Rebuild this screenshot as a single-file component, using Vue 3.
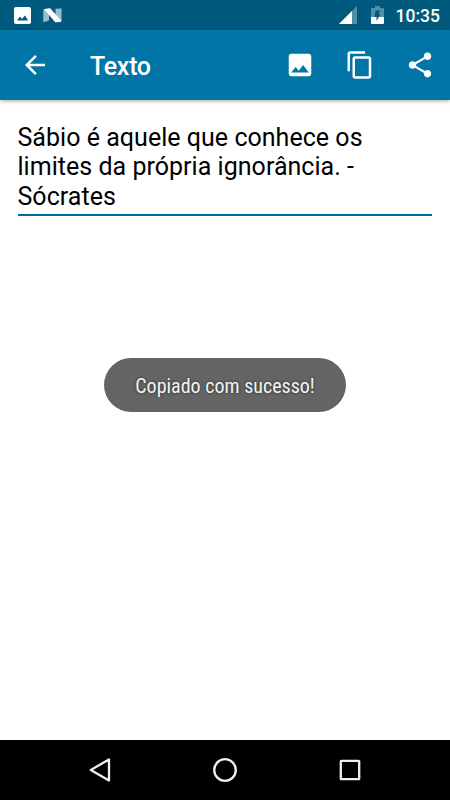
<template>
    <div class="screen">
        <div class="status">
            <svg class="status-image" width="17" height="17" viewBox="0 0 17 17">
                <path fill="#fff" fill-rule="evenodd" d="M2 0h13a2 2 0 0 1 2 2v13a2 2 0 0 1-2 2H2a2 2 0 0 1-2-2V2a2 2 0 0 1 2-2zM3 13.5h11.2l-3.3-5-2.9 3.4-2-2.4z" />
            </svg>
            <svg class="status-n" width="19" height="15" viewBox="0 0 19 15">
                <path fill="#fff" fill-opacity=".6" d="M0.3 1.2v13l5.7-1.7V3z M18.5 0.6v13l-6-2.4V0.8z" />
                <path fill="#fff" d="M1 1L7.2 0.2L18.3 12.8L17.5 14L12.2 14.3z" />
            </svg>
            <div class="status-right">
                <svg class="signal" width="18" height="18" viewBox="0 0 18 18">
                    <path fill="#fff" fill-opacity=".32" d="M18 0v18H0z" />
                    <path fill="#fff" d="M13 5v13H0z" />
                </svg>
                <svg class="battery" width="13" height="18" viewBox="0 0 13 18">
                    <path fill="#fff" fill-opacity=".32" d="M1 2h3V0h5v2h3a1 1 0 0 1 1 1v8H0V3a1 1 0 0 1 1-1z" />
                    <path fill="#fff" d="M0 11h13v6a1 1 0 0 1-1 1H1a1 1 0 0 1-1-1z" />
                    <path fill="#005a7e" d="M4.5 4.5H9L7.5 8H9.5L5.5 15V11H3.5z" />
                </svg>
                <span class="clock">10:35</span>
            </div>
        </div>

        <header class="toolbar">
            <svg class="back" width="30" height="30" viewBox="0 0 24 24">
                <path d="M20 11H7.83l5.59-5.59L12 4l-8 8 8 8 1.41-1.41L7.83 13H20v-2z" />
            </svg>
            <h1>{{ title }}</h1>
            <div class="actions">
                <svg v-for="icon in actions" :key="icon.name" width="30" height="30" viewBox="0 0 24 24">
                    <path :d="icon.path" />
                </svg>
            </div>
        </header>

        <main class="content">
            <p class="field">{{ quote }}</p>
        </main>

        <div class="toast"><span>{{ message }}</span></div>

        <nav class="navbar">
            <svg width="30" height="30" viewBox="0 0 30 30">
                <path d="M5.8 15L24 4.4v21.2z" />
            </svg>
            <svg width="30" height="30" viewBox="0 0 30 30">
                <circle cx="15" cy="15" r="10.8" />
            </svg>
            <svg width="30" height="30" viewBox="0 0 30 30">
                <rect x="5.8" y="5.8" width="18.4" height="18.4" rx=".5" />
            </svg>
        </nav>
    </div>
</template>

<script setup>
import { ref } from 'vue';

const title = 'Texto';
const quote = ref('Sábio é aquele que conhece os limites da própria ignorância. - Sócrates');
const message = ref('Copiado com sucesso!');

const actions = [
    {
        name: 'image',
        path: 'M21 19V5c0-1.1-.9-2-2-2H5c-1.1 0-2 .9-2 2v14c0 1.1.9 2 2 2h14c1.1 0 2-.9 2-2zM8.5 13.5l2.5 3.01L14.5 12l4.5 6H5l3.5-4.5z',
    },
    {
        name: 'copy',
        path: 'M16 1H4c-1.1 0-2 .9-2 2v14h2V3h12V1zm3 4H8c-1.1 0-2 .9-2 2v14c0 1.1.9 2 2 2h11c1.1 0 2-.9 2-2V7c0-1.1-.9-2-2-2zm0 16H8V7h11v14z',
    },
    {
        name: 'share',
        path: 'M18 16.08c-.76 0-1.44.3-1.96.77L8.91 12.7c.05-.23.09-.46.09-.7s-.04-.47-.09-.7l7.05-4.11c.54.5 1.25.81 2.04.81 1.66 0 3-1.34 3-3s-1.34-3-3-3-3 1.34-3 3c0 .24.04.47.09.7L8.04 9.81C7.5 9.31 6.79 9 6 9c-1.66 0-3 1.34-3 3s1.34 3 3 3c.79 0 1.5-.31 2.04-.81l7.12 4.16c-.05.21-.08.43-.08.65 0 1.61 1.31 2.92 2.92 2.92s2.92-1.31 2.92-2.92-1.31-2.92-2.92-2.92z',
    },
];
</script>

<style>
body {
    background-color: #fff;
}
</style>

<style scoped>
.screen {
    position: relative;
    display: flex;
    flex-direction: column;
    width: 450px;
    height: 800px;
    overflow: hidden;
    background-color: #fff;
    font-family: Roboto, "Liberation Sans", sans-serif;
}

svg {
    display: block;
    flex: none;
}

.status {
    display: flex;
    align-items: center;
    height: 30px;
    padding: 0 10px 0 14px;
    box-sizing: border-box;
    background-color: #005a7e;
}

.status-n {
    margin-left: 12px;
}

.status-right {
    display: flex;
    align-items: center;
    margin-left: auto;
}

.battery {
    margin: 0 12px 0 14px;
}

.clock {
    color: #fff;
    font-size: 17.5px;
    font-weight: 500;
    line-height: 30px;
    padding-top: 2px;
}

.toolbar {
    display: flex;
    align-items: center;
    height: 70px;
    padding: 0 15px 0 20px;
    box-sizing: border-box;
    background-color: #0075a6;
    box-shadow: 0 1px 4px rgba(0, 0, 0, 0.35);
}

.toolbar path {
    fill: #fff;
}

h1 {
    margin: 2px 0 0 40px;
    color: #fff;
    font-size: 25px;
    font-weight: 500;
    letter-spacing: -0.3px;
}

.actions {
    display: flex;
    gap: 30px;
    margin-left: auto;
}

.content {
    flex: 1;
    padding: 23px 18px 0 17.5px;
}

.field {
    margin: 0;
    padding-bottom: 3px;
    border-bottom: 2px solid #0069a0;
    color: #000;
    font-size: 25px;
    line-height: 29.3px;
    letter-spacing: 0.03px;
}

.toast {
    position: absolute;
    top: 358px;
    left: 104px;
    display: flex;
    align-items: center;
    justify-content: center;
    width: 242px;
    height: 54px;
    padding-top: 2px;
    box-sizing: border-box;
    border-radius: 27px;
    background-color: #646464;
    color: #f5f5f5;
    font-family: "Roboto Condensed", Roboto, sans-serif;
    font-size: 20px;
    font-stretch: condensed;
    white-space: nowrap;
    text-shadow: 0 0 3px rgba(0, 0, 0, 0.6);
}

.navbar {
    display: flex;
    justify-content: space-between;
    align-items: center;
    height: 60px;
    padding: 0 85px;
    box-sizing: border-box;
    background-color: #000;
}

.navbar svg * {
    fill: none;
    stroke: #f0f0f0;
    stroke-width: 2.3;
    stroke-linejoin: round;
}
</style>
